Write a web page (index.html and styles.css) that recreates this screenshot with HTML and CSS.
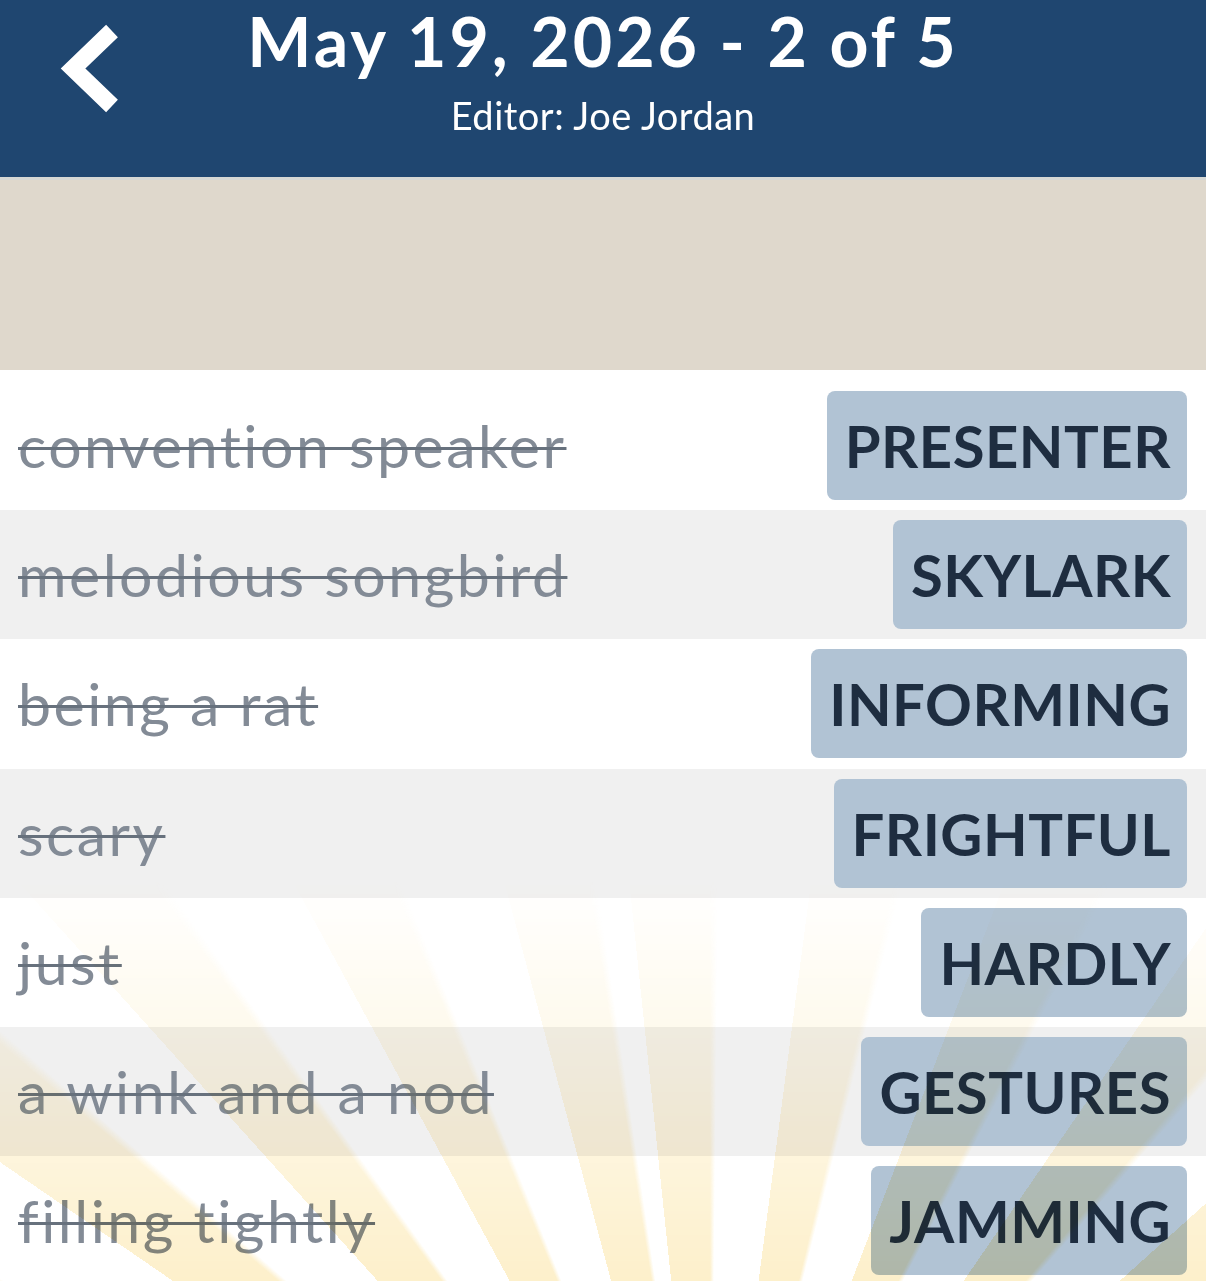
FILE: index.html
```html
<!DOCTYPE html>
<html>
<head>
<meta charset="utf-8">
<link rel="stylesheet" href="styles.css">
</head>
<body>
<div class="page">
  <header class="topbar">
    <div class="back">
      <svg class="back-icon" width="130" height="140" viewBox="0 0 130 140">
        <polyline points="112,31 73,68.5 112,106" fill="none" stroke="#ffffff" stroke-width="17" stroke-linejoin="miter" stroke-linecap="butt"/>
      </svg>
    </div>
    <div class="titles">
      <div class="title">May 19, 2026 - 2 of 5</div>
      <div class="subtitle">Editor: Joe Jordan</div>
    </div>
    <div></div>
  </header>
  <div class="band"></div>
  <ul class="list">
    <li class="row"><span class="clue">convention speaker</span><span class="answer">PRESENTER</span></li>
    <li class="row alt"><span class="clue">melodious songbird</span><span class="answer">SKYLARK</span></li>
    <li class="row"><span class="clue">being a rat</span><span class="answer">INFORMING</span></li>
    <li class="row alt"><span class="clue">scary</span><span class="answer">FRIGHTFUL</span></li>
    <li class="row"><span class="clue">just</span><span class="answer">HARDLY</span></li>
    <li class="row alt"><span class="clue">a wink and a nod</span><span class="answer">GESTURES</span></li>
    <li class="row"><span class="clue">filling tightly</span><span class="answer">JAMMING</span></li>
  </ul>
  <div class="rays"></div>
</div>
</body>
</html>
```

FILE: styles.css
```css
* { box-sizing: border-box; }
html, body {
  margin: 0;
  padding: 0;
  background: #ffffff;
}
body {
  font-family: "Lato", "Open Sans", "Liberation Sans", sans-serif;
  overflow: hidden;
  height: 1281px;
}
.page {
  position: relative;
  width: 1206px;
  height: 1281px;
  overflow: hidden;
}
.topbar {
  height: 177px;
  background: #1f4670;
  display: grid;
  grid-template-columns: 1fr auto 1fr;
  align-items: start;
  color: #ffffff;
}
.back {
  justify-self: start;
  height: 140px;
}
.back-icon { display: block; }
.titles {
  display: flex;
  flex-direction: column;
  align-items: center;
}
.title {
  font-size: 68px;
  font-weight: 700;
  line-height: 82px;
  letter-spacing: 3px;
  white-space: nowrap;
}
.subtitle {
  margin-top: 8px;
  font-size: 38px;
  font-weight: 400;
  line-height: 50px;
  letter-spacing: 0.5px;
  white-space: nowrap;
}
.band {
  height: 193px;
  background: #dfd8cc;
  border-top: 3px solid #d6d8d5;
}
.list {
  list-style: none;
  margin: 0;
  padding: 11px 0 0 0;
}
.row {
  height: 129.2px;
  display: flex;
  align-items: center;
  justify-content: space-between;
  padding: 0 19px 0 18px;
  background: #ffffff;
}
.row.alt { background: #f0f0f0; }
.clue {
  font-size: 59px;
  letter-spacing: 2.5px;
  color: #838b96;
  text-decoration: line-through;
  text-decoration-color: #67717d;
  text-decoration-thickness: 3px;
  white-space: nowrap;
  line-height: 1;
}
.answer {
  height: 109px;
  display: flex;
  align-items: center;
  padding: 0 16px 0 18px;
  background: #b1c3d4;
  border-radius: 8px;
  color: #1e2d40;
  font-size: 58px;
  font-weight: 700;
  letter-spacing: 0.5px;
  white-space: nowrap;
}
.rays {
  position: absolute;
  left: 0;
  top: 0;
  width: 1206px;
  height: 1281px;
  pointer-events: none;
  mix-blend-mode: multiply;
  background: repeating-conic-gradient(from -6deg at 710px 1650px, #fbe3a0 0deg 6deg, rgba(255,255,255,0) 6.6deg 13.5deg);
  -webkit-mask-image: linear-gradient(to bottom, rgba(0,0,0,0) 880px, rgba(0,0,0,0.25) 1080px, rgba(0,0,0,0.55) 1281px);
  mask-image: linear-gradient(to bottom, rgba(0,0,0,0) 880px, rgba(0,0,0,0.25) 1080px, rgba(0,0,0,0.55) 1281px);
}
```
